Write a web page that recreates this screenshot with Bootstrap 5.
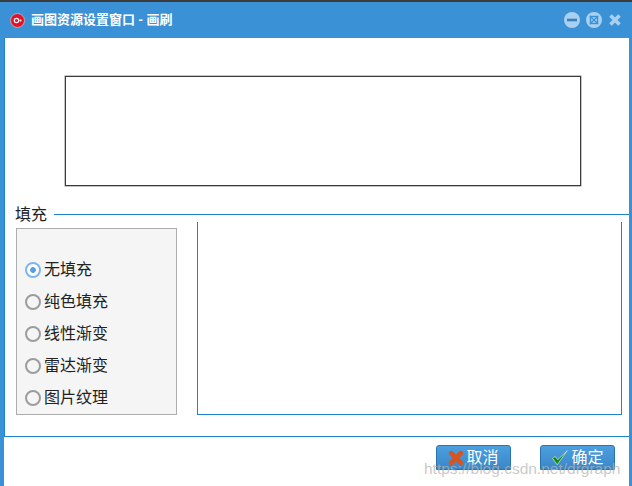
<!DOCTYPE html>
<html lang="zh"><head><meta charset="utf-8">
<link href="https://cdn.jsdelivr.net/npm/bootstrap@5.3.0/dist/css/bootstrap.min.css" rel="stylesheet">
<style>
html,body{margin:0;height:486px;overflow:hidden;background:#fff}
body{font-family:"Liberation Sans","Noto Sans CJK SC",sans-serif;color:#222}
.dlg{height:486px;border-top:2px solid #3c3c3c;background:#3a91d5;padding:0 3px 0 4px;position:relative;overflow:hidden}
.ttl{height:36px;color:#fff;font-size:13px;font-weight:700;gap:6px;padding-left:6px}
.ttl svg{flex:none}
.bodyp{background:#fff;height:399px;border-left:1px solid #1f84cf;border-bottom:1px solid #1f84cf;padding-top:38px}
.preview{width:516px;height:110px;border:1px solid #3a3a3a;box-shadow:0 0 0 .5px #8a8a8a;margin-left:60px}
.grp{margin-top:20px;height:16px;padding-left:10px;font-size:16px;line-height:18px;gap:7px}
.grp span{position:relative;top:1px}
.grp i{flex:1;height:1px;background:#1f84cf}
.cols{padding:0 7px 0 11px;gap:20px;align-items:flex-start}
.pick{width:161px;height:187px;background:#f5f5f5;border:1px solid #adadad;padding-top:25px;margin-top:6px}
.pick label{height:32px;font-size:16px;padding-left:8px;gap:3px;color:#222}
.rd{width:16px;height:16px;border-radius:50%;border:2.5px solid #9c9c9c;background:#f5f5f5;flex:none}
.rd.on{border-color:#7ab8ec;background:radial-gradient(circle,#5a9fdc 0 2.5px,#fff 3.2px)}
.pane{flex:1;height:193px;border:1px solid #1f84cf;border-top:0}
.foot{background:#fff;height:49px;padding:8px 14px 0 0;gap:29px;justify-content:flex-end}
.bt{width:75px;height:25px;padding:0;border:1px solid #2a73ad;border-radius:3px 3px 0 0;background:linear-gradient(#4d9fe0,#3a87c8);color:#fff;font-size:16px;gap:2px;line-height:1}
.bt:hover{background:linear-gradient(#4d9fe0,#3a87c8);color:#fff}
.mark-c{position:absolute;left:424px;top:455px;font-size:15.5px;color:#b4b4b4;opacity:.7;white-space:nowrap}
</style></head><body>
<div class="dlg">
<div class="ttl d-flex align-items-center">
<svg width="15" height="15" viewBox="0 0 15 15"><circle cx="7.5" cy="7.5" r="7" fill="#e2122a" stroke="#c9a9a9"/><circle cx="6.5" cy="7.5" r="2.2" fill="none" stroke="#fff" stroke-width="1.2"/><circle cx="10.5" cy="7.5" r="1" fill="#fff"/></svg>
<span>画图资源设置窗口 - 画刷</span>
<div class="ms-auto d-flex align-items-center" style="gap:6px;padding-right:7px">
<svg width="16" height="16" viewBox="0 0 16 16"><circle cx="8" cy="8" r="8" fill="#a8d0f0"/><rect x="3" y="6.7" width="10" height="2.6" fill="#3a7fb5"/></svg>
<svg width="16" height="16" viewBox="0 0 16 16"><circle cx="8" cy="8" r="8" fill="#a8d0f0"/><rect x="4.5" y="4.5" width="7" height="7" fill="none" stroke="#3a91d5" stroke-width="1.4"/><path d="M4 4l8 8M12 4l-8 8" stroke="#3a91d5" stroke-width="1.2"/></svg>
<svg width="14" height="14" viewBox="0 0 14 14"><path d="M2.5 2.5l9 9M11.5 2.5l-9 9" stroke="#a8d0f0" stroke-width="3.6"/></svg>
</div></div>
<div class="bodyp">
<div class="preview"></div>
<div class="grp d-flex align-items-center"><span>填充</span><i></i></div>
<div class="cols d-flex">
<div class="pick">
<label class="d-flex align-items-center"><span class="rd on"></span>无填充</label>
<label class="d-flex align-items-center"><span class="rd"></span>纯色填充</label>
<label class="d-flex align-items-center"><span class="rd"></span>线性渐变</label>
<label class="d-flex align-items-center"><span class="rd"></span>雷达渐变</label>
<label class="d-flex align-items-center"><span class="rd"></span>图片纹理</label>
</div>
<div class="pane"></div>
</div>
</div>
<div class="foot d-flex">
<button class="bt btn d-flex align-items-center justify-content-center"><svg width="16" height="16" viewBox="0 0 15 15"><path d="M3 3l9 9M12 3l-9 9" stroke="#d9531e" stroke-width="4.4" stroke-linecap="round"/></svg>取消</button>
<button class="bt btn d-flex align-items-center justify-content-center"><svg width="18" height="18" viewBox="0 0 16 16"><path d="M1.5 8.5l4 5.5L14.5 1.5 6 9.5 3.5 6.5z" fill="#0f8a12" stroke="#e8f4e8" stroke-width=".6"/></svg>确定</button>
</div>
<span class="mark-c">https://blog.csdn.net/drgraph</span>
</div>
<script src="https://cdn.jsdelivr.net/npm/bootstrap@5.3.0/dist/js/bootstrap.bundle.min.js"></script>
</body></html>
